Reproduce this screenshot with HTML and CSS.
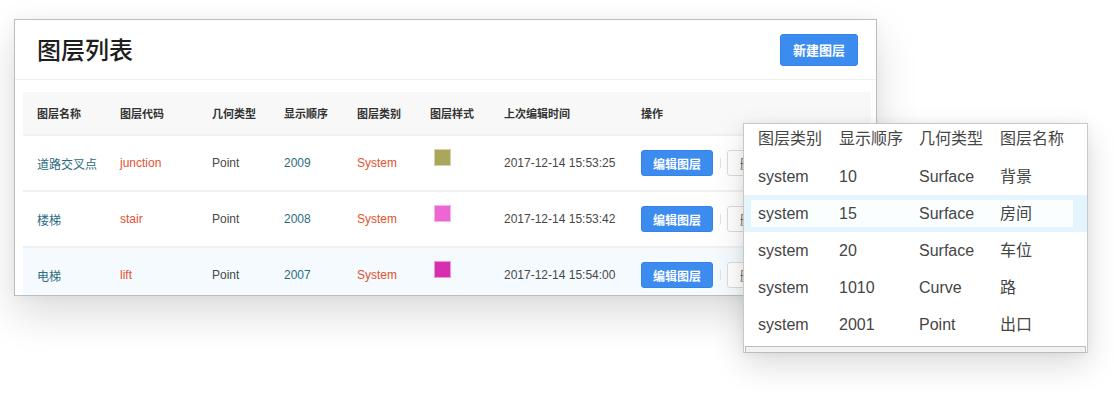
FILE: index.html
```html
<!DOCTYPE html>
<html lang="zh-CN">
<head>
<meta charset="utf-8">
<title>图层列表</title>
<link rel="stylesheet" href="styles.css">
</head>
<body>
<div class="stage">
  <div class="card">
    <div class="card-head">
      <h1 class="title">图层列表</h1>
      <button class="btn btn-primary btn-new">新建图层</button>
    </div>
    <div class="card-body">
      <div class="table">
        <div class="tr th">
          <div>图层名称</div><div>图层代码</div><div>几何类型</div><div>显示顺序</div><div>图层类别</div><div>图层样式</div><div>上次编辑时间</div><div>操作</div>
        </div>
        <div class="tr">
          <div class="teal">道路交叉点</div><div class="red">junction</div><div class="gray">Point</div><div class="teal">2009</div><div class="red">System</div>
          <div><span class="swatch sw1"></span></div>
          <div class="gray">2017-12-14 15:53:25</div>
          <div class="ops"><button class="btn btn-primary btn-edit">编辑图层</button><span class="sep"></span><button class="btn btn-ghost">删</button></div>
        </div>
        <div class="tr">
          <div class="teal">楼梯</div><div class="red">stair</div><div class="gray">Point</div><div class="teal">2008</div><div class="red">System</div>
          <div><span class="swatch sw2"></span></div>
          <div class="gray">2017-12-14 15:53:42</div>
          <div class="ops"><button class="btn btn-primary btn-edit">编辑图层</button><span class="sep"></span><button class="btn btn-ghost">删</button></div>
        </div>
        <div class="tr hover">
          <div class="teal">电梯</div><div class="red">lift</div><div class="gray">Point</div><div class="teal">2007</div><div class="red">System</div>
          <div><span class="swatch sw3"></span></div>
          <div class="gray">2017-12-14 15:54:00</div>
          <div class="ops"><button class="btn btn-primary btn-edit">编辑图层</button><span class="sep"></span><button class="btn btn-ghost">删</button></div>
        </div>
      </div>
    </div>
  </div>

  <div class="panel">
    <div class="prow phead"><span>图层类别</span><span>显示顺序</span><span>几何类型</span><span>图层名称</span></div>
    <div class="prow"><span>system</span><span>10</span><span>Surface</span><span>背景</span></div>
    <div class="prow-sel"><div class="prow inner"><span>system</span><span>15</span><span>Surface</span><span>房间</span></div></div>
    <div class="prow"><span>system</span><span>20</span><span>Surface</span><span>车位</span></div>
    <div class="prow"><span>system</span><span>1010</span><span>Curve</span><span>路</span></div>
    <div class="prow"><span>system</span><span>2001</span><span>Point</span><span>出口</span></div>
    <div class="scrollbar"></div>
  </div>
</div>
</body>
</html>
```
FILE: styles.css
```css
* { box-sizing: border-box; }
html, body { margin: 0; padding: 0; background: #fff; }
body {
  font-family: "Liberation Sans", "Noto Sans CJK SC", sans-serif;
  color: #333;
  width: 1114px;
  height: 406px;
  overflow: hidden;
}
.stage { position: relative; width: 1114px; height: 406px; padding: 19px 0 0 14px; }

.card {
  width: 863px;
  height: 277px;
  border: 1px solid #bdbdbd;
  background: #fff;
  overflow: hidden;
  box-shadow: 0 18px 40px rgba(0, 0, 0, 0.14), 0 0 12px rgba(0, 0, 0, 0.04);
}
.card-head {
  height: 60px;
  display: flex;
  align-items: center;
  justify-content: space-between;
  padding: 0 18px 0 22px;
  border-bottom: 1px solid #efefef;
}
.title {
  margin: 0;
  font-size: 24px;
  font-weight: 500;
  color: #1e1e1e;
  font-family: "Noto Sans CJK SC", sans-serif;
  margin-top: -2px;
}
.btn {
  font-family: "Noto Sans CJK SC", sans-serif;
  font-weight: 600;
  border-radius: 3px;
  border: 1px solid transparent;
  cursor: pointer;
  padding: 0;
}
.btn-primary { background: #3c8cf0; color: #fff; border-color: #3583e8; }
.btn-new { width: 78px; height: 32px; font-size: 13px; }
.card-body { padding: 12px 4px 0 8px; }

.table { width: 848px; }
.tr {
  display: grid;
  grid-template-columns: 83px 92px 72px 73px 73px 74px 137px 1fr;
  align-items: center;
  height: 56px;
  padding-left: 14px;
  border-bottom: 2px solid #f0f0f0;
  font-size: 12px;
}
.tr.th {
  height: 44px;
  background: #f8f8f8;
  font-size: 11px;
  font-weight: 700;
  color: #333;
  font-family: "Noto Sans CJK SC", sans-serif;
}
.tr.hover { background: #f4fafd; }
.teal { color: #2b6b80; }
.red { color: #e4512f; }
.gray { color: #484848; }
.swatch {
  display: block;
  width: 17px;
  height: 17px;
  margin: 0 0 12px 4px;
  border: 1px solid rgba(255, 255, 255, 0.5);
}
.sw1 { background: #aaa65c; }
.sw2 { background: #ee66d2; }
.sw3 { background: #d630b0; }
.ops { display: flex; align-items: center; }
.btn-edit { width: 72px; height: 26px; font-size: 12px; }
.sep { display: block; width: 1px; height: 10px; background: #e2e2e2; margin: 0 6px 0 7px; }
.btn-ghost { width: 72px; height: 26px; font-size: 12px; font-weight: 400; background: #fff; border-color: #dcdcdc; color: #555; text-align: left; padding-left: 12px; }

.panel {
  position: absolute;
  left: 743px;
  top: 123px;
  width: 345px;
  height: 230px;
  background: #fff;
  border: 1px solid #c8c8c8;
  box-shadow: 0 12px 30px rgba(0, 0, 0, 0.14), 0 0 10px rgba(0, 0, 0, 0.05);
  font-size: 16px;
  color: #454545;
}
.prow {
  display: grid;
  grid-template-columns: 81px 80px 81px 1fr;
  align-items: baseline;
  align-content: center;
  height: 37px;
  padding-left: 14px;
}
.prow span { white-space: nowrap; line-height: 20px; }
.phead { height: 34px; padding-bottom: 5px; }
.prow-sel {
  height: 37px;
  background: #e4f4fc;
  padding: 5px 14px 5px 7px;
}
.prow-sel .inner {
  height: 27px;
  background: #fbfeff;
  padding-left: 7px;
}
.scrollbar {
  margin: 3px 1px 0 1px;
  height: 7px;
  border: 1px solid #bcbcbc;
  background: #f2f2f2;
}
```
